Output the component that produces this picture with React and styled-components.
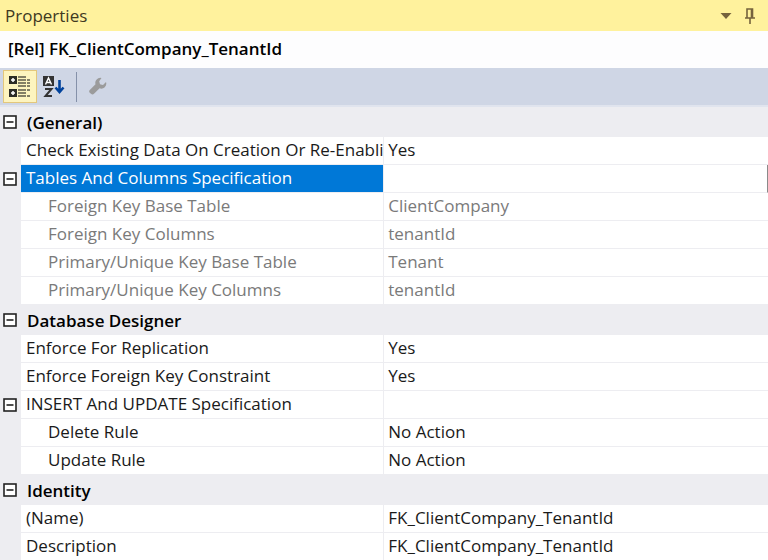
import React, { useState } from "react";
import styled, { createGlobalStyle, css } from "styled-components";

const GlobalStyle = createGlobalStyle`
  * { box-sizing: border-box; }
  body {
    margin: 0;
    background: #ededf1;
    color: #1a1a1a;
    font: 17px/22px "Open Sans", "Noto Sans", sans-serif;
  }
  button { font: inherit; color: inherit; }
`;

const Panel = styled.section`
  display: flex;
  flex-direction: column;
`;

const TitleBar = styled.header`
  display: flex;
  align-items: center;
  gap: 12px;
  height: 31px;
  padding: 0 12px 0 5px;
  background: #fff29d;
  color: #40391f;
`;

const Title = styled.h1`
  flex: 1;
  margin: 0;
  font-size: 17px;
  font-weight: 400;
`;

const TitleButton = styled.button`
  display: grid;
  place-items: center;
  padding: 0;
  border: 0;
  background: none;
  color: #75633d;
`;

const ObjectName = styled.h2`
  margin: 0;
  padding: 7px 8px 8px;
  background: #fdfdfe;
  color: #000;
  font-size: 17px;
  font-weight: 600;
`;

const Toolbar = styled.div`
  display: flex;
  align-items: center;
  height: 39px;
  padding: 0 3px;
  border-bottom: 2px solid #e0e4ee;
  background: #cfd6e5;
`;

const ToolButton = styled.button`
  display: grid;
  place-items: center;
  width: 34px;
  height: 33px;
  padding: 0;
  border: 1px solid ${(p) => (p.$active ? "#e3c77c" : "transparent")};
  background: ${(p) => (p.$active ? "#fdf4bf" : "transparent")};
`;

const Separator = styled.span`
  width: 1px;
  height: 30px;
  margin: 0 5px;
  background: #8591a9;
`;

const Grid = styled.table`
  width: 100%;
  table-layout: fixed;
  border-collapse: separate;
  border-spacing: 0;

  tbody:last-child tr:last-child > * {
    height: 27px;
    border-bottom: 0;
  }
`;

const GutterCol = styled.col`
  width: 21px;
`;

const NameCol = styled.col`
  width: 47.3%;
`;

const Gutter = styled.td`
  padding: 0 0 0 3px;
  background: #ededf1;
`;

const Expander = styled.button`
  display: block;
  width: 14px;
  height: 14px;
  padding: 0;
  border: 0;
  background: none;
`;

const CategoryName = styled.th`
  height: 30px;
  padding: 2px 6px 0;
  background: #ededf1;
  color: #000;
  font-weight: 600;
  text-align: left;
`;

const cell = css`
  height: 28px;
  padding: 0 0 1px 5px;
  overflow: hidden;
  border-bottom: 1px solid #ededf1;
  color: ${(p) => (p.$muted ? "#7a7a7a" : "#1a1a1a")};
  background: #fff;
  font-weight: 400;
  text-align: left;
  white-space: nowrap;
`;

const PropertyName = styled.th`
  ${cell}
  border-right: 1px solid #ededf1;
  ${(p) => p.$nested && "padding-left: 27px;"}
  ${(p) => p.$selected && "background: #0078d7; color: #fff;"}
`;

const PropertyValue = styled.td`
  ${cell}
  padding-left: 4px;
  ${(p) => p.$selected && "border-right: 1px solid #8a8a8a;"}
`;

const GROUPS = [
  {
    name: "(General)",
    rows: [
      { name: "Check Existing Data On Creation Or Re-Enabli", value: "Yes" },
      {
        name: "Tables And Columns Specification",
        selected: true,
        children: [
          { name: "Foreign Key Base Table", value: "ClientCompany", muted: true },
          { name: "Foreign Key Columns", value: "tenantId", muted: true },
          { name: "Primary/Unique Key Base Table", value: "Tenant", muted: true },
          { name: "Primary/Unique Key Columns", value: "tenantId", muted: true },
        ],
      },
    ],
  },
  {
    name: "Database Designer",
    rows: [
      { name: "Enforce For Replication", value: "Yes" },
      { name: "Enforce Foreign Key Constraint", value: "Yes" },
      {
        name: "INSERT And UPDATE Specification",
        children: [
          { name: "Delete Rule", value: "No Action" },
          { name: "Update Rule", value: "No Action" },
        ],
      },
    ],
  },
  {
    name: "Identity",
    rows: [
      { name: "(Name)", value: "FK_ClientCompany_TenantId" },
      { name: "Description", value: "FK_ClientCompany_TenantId" },
    ],
  },
];

function Toggle({ label, open, onToggle }) {
  return (
    <Expander type="button" aria-label={label} aria-expanded={open} onClick={onToggle}>
      <svg width="14" height="14" viewBox="0 0 14 14" display="block">
        <rect x="1" y="1" width="12" height="12" fill="#fff" stroke="#222" strokeWidth="1.6" />
        <path d={open ? "M3.5 7h7" : "M3.5 7h7M7 3.5v7"} stroke="#222" strokeWidth="1.6" />
      </svg>
    </Expander>
  );
}

function Property({ row, nested }) {
  const [open, setOpen] = useState(true);
  return (
    <>
      <tr>
        <Gutter>
          {row.children && <Toggle label={row.name} open={open} onToggle={() => setOpen(!open)} />}
        </Gutter>
        <PropertyName scope="row" $nested={nested} $muted={row.muted} $selected={row.selected}>
          {row.name}
        </PropertyName>
        <PropertyValue $muted={row.muted} $selected={row.selected}>{row.value}</PropertyValue>
      </tr>
      {open && row.children?.map((child) => <Property key={child.name} row={child} nested />)}
    </>
  );
}

function Group({ group }) {
  const [open, setOpen] = useState(true);
  return (
    <tbody>
      <tr>
        <Gutter>
          <Toggle label={group.name} open={open} onToggle={() => setOpen(!open)} />
        </Gutter>
        <CategoryName colSpan={2} scope="rowgroup">{group.name}</CategoryName>
      </tr>
      {open && group.rows.map((row) => <Property key={row.name} row={row} />)}
    </tbody>
  );
}

function CategorizedIcon() {
  return (
    <svg width="22" height="24" viewBox="0 0 22 24">
      <path d="M0 1h8v8H0zM0 14h8v8H0z" fill="#2c2c26" />
      <path d="M2 5h4M4 3v4M2 18h4M4 16v4" stroke="#fff" strokeWidth="1.5" />
      <path d="M9 2h8M9 5h8M9 8h8M9 11h8M9 15h8M9 18h8M9 21h8" stroke="#5b584a" strokeWidth="1.5" />
      <path d="M18 5h3M18 8h3M18 11h3M18 15h3M18 21h3" stroke="#5b584a" strokeWidth="1.5" />
    </svg>
  );
}

function SortIcon() {
  return (
    <svg width="22" height="24" viewBox="0 0 22 24">
      <path d="M0 1h11v10H0z" fill="#333" />
      <path d="M2.5 9.5 5.5 3l3 6.5M3.5 7.5h4" fill="none" stroke="#fff" strokeWidth="1.4" />
      <path d="M2 14h6.5L2.5 21H9" fill="none" stroke="#333" strokeWidth="2" />
      <path d="M16.5 5v12M12.500 12.500l4 4.500 4-4.500" fill="none" stroke="#00429c" strokeWidth="2.6" />
    </svg>
  );
}

function WrenchIcon() {
  return (
    <svg width="20" height="20" viewBox="0 0 20 20">
      <path
        d="M12.5 1a5 5 0 0 0-6 6.3L1 12.8a2.200 2.200 0 0 0 0 3.200l1 .8a2.200 2.200 0 0 0 3 0l5.600-5.500A5 5 0 0 0 17 5l-3 3-3-.8-.8-2.900z"
        fill="#9b9b9b"
      />
    </svg>
  );
}

export default function App() {
  return (
    <>
      <GlobalStyle />
      <Panel>
        <TitleBar>
          <Title>Properties</Title>
          <TitleButton type="button" aria-label="Window options">
            <svg width="12" height="6" viewBox="0 0 12 6">
              <path d="M0.500 0h11L6 6z" fill="currentColor" />
            </svg>
          </TitleButton>
          <TitleButton type="button" aria-label="Auto hide">
            <svg width="12" height="18" viewBox="0 0 12 18">
              <path d="M3 11V2h5.500v9M1 11h10M6 11v6M7.500 2v9" fill="none" stroke="currentColor" strokeWidth="1.6" />
            </svg>
          </TitleButton>
        </TitleBar>
        <ObjectName>[Rel] FK_ClientCompany_TenantId</ObjectName>
        <Toolbar role="toolbar" aria-label="Property view">
          <ToolButton type="button" $active aria-pressed="true" aria-label="Categorized"><CategorizedIcon /></ToolButton>
          <ToolButton type="button" aria-label="Alphabetical"><SortIcon /></ToolButton>
          <Separator />
          <ToolButton type="button" disabled aria-label="Property pages"><WrenchIcon /></ToolButton>
        </Toolbar>
        <Grid aria-label="Properties">
          <colgroup>
            <GutterCol />
            <NameCol />
            <col />
          </colgroup>
          {GROUPS.map((group) => <Group key={group.name} group={group} />)}
        </Grid>
      </Panel>
    </>
  );
}
